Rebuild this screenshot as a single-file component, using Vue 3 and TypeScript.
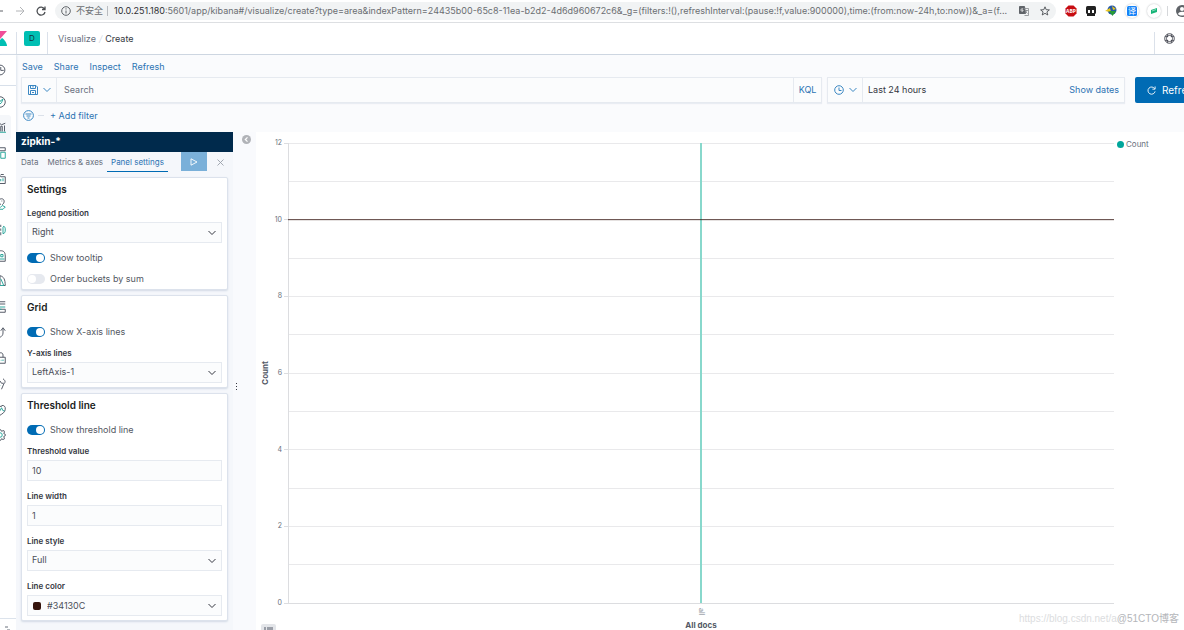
<script setup lang="ts">
import { ref } from 'vue'

interface Shape { d: string; teal?: boolean }

const menu: string[] = ['Save', 'Share', 'Inspect', 'Refresh']
const tabs: string[] = ['Data', 'Metrics & axes', 'Panel settings']
const activeTab = ref('Panel settings')

const query = ref('')
const showTooltip = ref(true)
const orderBuckets = ref(false)
const showXLines = ref(true)
const showThreshold = ref(true)
const thresholdValue = ref('10')
const lineWidth = ref('1')
const lineColor = ref('#34130C')

const yMax = 12
const yLines: number[] = Array.from({ length: 12 }, (_, i) => i + 1)
const yTicks: number[] = [0, 2, 4, 6, 8, 10, 12]
const pct = (v: number): string => `${(1 - v / yMax) * 100}%`

const nav: { name: string; shapes: Shape[] }[] = [
  { name: 'Discover', shapes: [{ d: 'M8 1a7 7 0 1 1 0 14a7 7 0 0 1 0-14z' }, { d: 'M12 4L10 9L6 12L8 7z', teal: true }] },
  { name: 'Visualize', shapes: [{ d: 'M1 4l5-2l4 3l5-2M9 14V7h2v7M14 6v8' }, { d: 'M0 15h16M3 8v5M6 9v4', teal: true }] },
  { name: 'Dashboard', shapes: [{ d: 'M1 1h14v4H1zM1 7h5v7H1z' }, { d: 'M9 7h6v8H9z', teal: true }] },
  { name: 'Canvas', shapes: [{ d: 'M1 14V2h6l2 3h6v9zM9 2h4' }, { d: 'M9 11V8M12 11V7', teal: true }] },
  { name: 'Maps', shapes: [{ d: 'M9 9C6 6 6 1 10 1s5 5 1 8M10 4h1' }, { d: 'M8 13l3-3l4 2l-3 3H3', teal: true }] },
  { name: 'Machine Learning', shapes: [{ d: 'M9 1v3M9 6v3M9 11v4' }, { d: 'M12 3c3 1 3 1 3 5s-1 4-3 5V4', teal: true }] },
  { name: 'Infrastructure', shapes: [{ d: 'M3 9C3 3 6 1 9 1s6 1 6 7v7H2' }, { d: 'M9 6h3v3H9zM7 12h7', teal: true }] },
  { name: 'Logs', shapes: [{ d: 'M1 14V4l4-3h3v13M8 1c5 1 7 5 7 13h-3' }, { d: 'M9 5l4 9H8', teal: true }] },
  { name: 'APM', shapes: [{ d: 'M1 1h14M1 4h14M8 15h7v-4H8' }, { d: 'M3 8h12M6 11h4', teal: true }] },
  { name: 'Uptime', shapes: [{ d: 'M2 12c4 4 10 1 10-4V2M9 5l3-4l3 4' }, { d: 'M2 9l4 2', teal: true }] },
  { name: 'SIEM', shapes: [{ d: 'M1 7h14v8H1zM6 7V4c0-4 6-4 6 0v3' }, { d: 'M9 11h1M12 10v2', teal: true }] },
  { name: 'Dev Tools', shapes: [{ d: 'M12 1c4 3 3 5 1 7l-3 7M8 4l2 3h3' }, { d: 'M4 14l4-4', teal: true }] },
  { name: 'Monitoring', shapes: [{ d: 'M3 5c2-5 6-3 6-1c1-4 7-2 6 3c0 4-4 6-7 8' }, { d: 'M3 9h5l2-4l2 4h2', teal: true }] },
  { name: 'Management', shapes: [{ d: 'M7 1h2l1 2l3-1l1 2l-1 2l2 1v2l-2 1l1 3l-2 1l-2-1l-1 2H7l-1-2l-3 1l-1-3l2-2l-2-2l1-3l3 1z' }, { d: 'M8 5a3 3 0 1 1 0 6a3 3 0 0 1 0-6z', teal: true }] },
]
</script>

<template>
  <div class="page">
    <header class="browser">
      <div class="nav-buttons">
        <button class="icon-btn" aria-label="Back"><svg width="12" height="12" viewBox="0 0 12 12"><path d="M1 6h10M6 1L1 6l5 5" stroke="#5f6368" /></svg></button>
        <button class="icon-btn" aria-label="Forward"><svg width="10" height="10" viewBox="0 0 10 10"><path d="M1 5h8M5 1l4 4l-4 4" stroke="#b2b4b7" /></svg></button>
        <button class="icon-btn" aria-label="Reload"><svg width="10" height="10" viewBox="0 0 10 10"><path d="M8.500 3A4 4 0 1 0 9 6M9 0.500V3.500H6" stroke="#4b4e52" stroke-width="1.300" /></svg></button>
      </div>
      <div class="omnibox">
        <svg width="10" height="10" viewBox="0 0 10 10"><circle cx="5" cy="5" r="4.300" stroke="#5f6368" /><path d="M5 4.500v3M5 2.300v1.200" stroke="#5f6368" /></svg>
        <span class="insecure">不安全</span>
        <span class="bar"></span>
        <span class="url"><b>10.0.251.180</b>:5601/app/kibana#/visualize/create?type=area&amp;indexPattern=24435b00-65c8-11ea-b2d2-4d6d960672c6&amp;_g=(filters:!(),refreshInterval:(pause:!f,value:900000),time:(from:now-24h,to:now))&amp;_a=(f...</span>
        <svg width="10" height="10" viewBox="0 0 10 10"><path d="M0.500 0.500h5l1 7h-6z" fill="#5f6368" stroke="#5f6368" /><path d="M4.500 2.500h5v7h-4M6 4.500h3M7.500 4c0 2-1 3-1.500 3.500M6.500 5.500l2 2" stroke="#85888c" stroke-width="0.800" /><path d="M4 3a1.300 1.300 0 1 0 0 2V4H3" stroke="#fff" stroke-width="0.700" /></svg>
        <svg width="10" height="10" viewBox="0 0 10 10"><path d="M5 0.800l1.200 2.900l3.200 0.200l-2.500 2l0.900 3.100L5 7.300L2.200 9l0.900-3.100l-2.500-2l3.200-0.200z" stroke="#4b4e52" stroke-width="0.900" /></svg>
      </div>
      <div class="extensions">
        <svg width="12" height="12" viewBox="0 0 12 12"><path d="M3.500 0.500h5l3 3v5l-3 3h-5l-3-3v-5z" fill="#c70d12" /><text x="6" y="8" text-anchor="middle" class="abp">ABP</text></svg>
        <svg width="12" height="12" viewBox="0 0 12 12"><rect x="1" y="1" width="10" height="8" rx="1.500" fill="#222" /><rect x="2" y="8" width="8" height="3" fill="#222" /><rect x="3" y="5" width="2" height="3" fill="#fff" /><rect x="7" y="5" width="2" height="3" fill="#fff" /></svg>
        <svg width="12" height="12" viewBox="0 0 12 12"><circle cx="7" cy="5" r="4.500" fill="#2357a8" /><path d="M0 6l5-3l1 4zM7 1l4 3l-3 1z" fill="#e9c51b" /><path d="M4 6h7l-3.500 5z" fill="#279b36" /></svg>
        <span class="round"><svg width="10" height="10" viewBox="0 0 10 10"><rect width="10" height="10" rx="1.500" fill="#1683f8" /><text x="5" y="8" text-anchor="middle" class="yi">译</text></svg></span>
        <span class="round"><svg width="8" height="8" viewBox="0 0 8 8"><path d="M1 3l6-2v4L1 7z" fill="#16b578" /><path d="M2 4l4-1.500" stroke="#fff" stroke-width="0.500" /></svg></span>
      </div>
      <span class="split"></span>
      <svg class="avatar" width="14" height="14" viewBox="0 0 14 14"><circle cx="7" cy="7" r="6" fill="#5f6368" /><circle cx="7" cy="5" r="2" fill="#fff" /><path d="M3 10c1-3 7-3 8 0c-2 2-6 2-8 0z" fill="#fff" /></svg>
    </header>

    <div class="topbar">
      <a class="logo" href="#" aria-label="Kibana"><svg width="7" height="15" viewBox="0 0 7 15"><path d="M0 0h7L0 8z" fill="#f04e98" /><path d="M0 9l2-2c2 1 5 5 5 8H0z" fill="#00bfb3" /></svg></a>
      <div class="space"><button class="space-btn">D</button></div>
      <nav class="crumbs"><a href="#">Visualize</a><i>/</i><span>Create</span></nav>
      <button class="help" aria-label="Help">
        <svg width="11" height="11" viewBox="0 0 16 16"><circle cx="8" cy="8" r="7" stroke="#343741" stroke-width="1.200" /><circle cx="8" cy="8" r="4.500" stroke="#343741" stroke-width="1.200" /><path d="M5 1.500v4M11 1.500v4M5 10.500v4M11 10.500v4M1.500 5h4M1.500 11h4M10.500 5h4M10.500 11h4" stroke="#343741" /></svg>
      </button>
    </div>

    <div class="body">
      <aside class="sidenav">
        <button class="side-item recent" aria-label="Recently viewed"><svg width="12" height="12" viewBox="0 0 16 16"><circle cx="8" cy="8" r="6.500" stroke="#535966" stroke-width="1.300" /><path d="M9 4v4.500h4" stroke="#535966" stroke-width="1.300" /></svg></button>
        <ul class="side-list">
          <li v-for="n in nav" :key="n.name" :class="{ current: n.name === 'Visualize' }">
            <a class="side-item" href="#" :aria-label="n.name">
              <svg width="12" height="12" viewBox="0 0 16 16"><path v-for="s in n.shapes" :key="s.d" :d="s.d" :stroke="s.teal ? '#2aa79b' : '#535966'" stroke-width="1.300" /></svg>
            </a>
          </li>
        </ul>
        <button class="side-item collapse" aria-label="Collapse"><svg width="10" height="8" viewBox="0 0 10 8"><path d="M5 2h3M7 5h3" stroke="#69707d" /></svg></button>
      </aside>

      <main class="main">
        <nav class="menu"><a v-for="m in menu" :key="m" href="#">{{ m }}</a></nav>

        <div class="query-row">
          <div class="box search-box">
            <button class="box-btn" aria-label="Saved queries">
              <svg width="10" height="10" viewBox="0 0 10 10"><path d="M0.500 0.500h7.500l1.500 1.500v7.500h-9zM2.500 0.500v3h5v-3M2.500 9.500v-4h5v4M5 1v1.500M4 7.500h2" stroke="#3b87c2" /></svg>
              <svg width="8" height="6" viewBox="0 0 8 6"><path d="M0.500 1L4 4.500L7.500 1" stroke="#3b87c2" /></svg>
            </button>
            <input v-model="query" class="search" type="text" placeholder="Search" aria-label="Search" />
            <button class="kql">KQL</button>
          </div>
          <div class="box date-box">
            <button class="box-btn" aria-label="Date quick select">
              <svg width="10" height="10" viewBox="0 0 10 10"><circle cx="5" cy="5" r="4.300" stroke="#3b87c2" /><path d="M5 2.500v3h2.500" stroke="#3b87c2" /></svg>
              <svg width="8" height="6" viewBox="0 0 8 6"><path d="M0.500 1L4 4.500L7.500 1" stroke="#3b87c2" /></svg>
            </button>
            <span class="range">Last 24 hours</span>
            <button class="show-dates">Show dates</button>
          </div>
          <button class="refresh">
            <svg width="9" height="9" viewBox="0 0 10 10"><path d="M8.500 3A4 4 0 1 0 9 6M9 0.500V3.500H6" stroke="#fff" /></svg>
            <span>Refresh</span>
          </button>
        </div>

        <div class="filters">
          <button class="icon-btn" aria-label="Filter options"><svg width="11" height="11" viewBox="0 0 11 11"><circle cx="5.500" cy="5.500" r="4.900" stroke="#3b87c2" /><path d="M2.500 4h6M3.500 6h4M4.500 8h2" stroke="#3b87c2" /></svg></button>
          <span class="dash"></span>
          <a href="#">+ Add filter</a>
        </div>

        <div class="workspace">
          <section class="editor">
            <h2 class="index">zipkin-*</h2>
            <div class="tabs">
              <button v-for="t in tabs" :key="t" class="tab" :class="{ active: t === activeTab }" @click="activeTab = t">{{ t }}</button>
              <button class="apply" aria-label="Apply changes"><svg width="8" height="8" viewBox="0 0 8 8"><path d="M1 0.800L7 4L1 7.200z" stroke="#fff" stroke-width="0.900" /></svg></button>
              <button class="discard" aria-label="Discard changes"><svg width="7" height="7" viewBox="0 0 7 7"><path d="M0.500 0.500l6 6M6.500 0.500l-6 6" stroke="#9a9fa9" stroke-width="0.900" /></svg></button>
            </div>

            <div class="cards">
              <section class="card">
                <h3>Settings</h3>
                <label class="lbl" for="legend">Legend position</label>
                <div class="select">
                  <select id="legend"><option>Right</option></select>
                  <svg width="8" height="6" viewBox="0 0 8 6"><path d="M0.500 1L4 4.500L7.500 1" stroke="#343741" /></svg>
                </div>
                <label class="switch"><input v-model="showTooltip" type="checkbox" /><span>Show tooltip</span></label>
                <label class="switch"><input v-model="orderBuckets" type="checkbox" /><span>Order buckets by sum</span></label>
              </section>

              <section class="card">
                <h3>Grid</h3>
                <label class="switch"><input v-model="showXLines" type="checkbox" /><span>Show X-axis lines</span></label>
                <label class="lbl" for="ylines">Y-axis lines</label>
                <div class="select">
                  <select id="ylines"><option>LeftAxis-1</option></select>
                  <svg width="8" height="6" viewBox="0 0 8 6"><path d="M0.500 1L4 4.500L7.500 1" stroke="#343741" /></svg>
                </div>
              </section>

              <section class="card">
                <h3>Threshold line</h3>
                <label class="switch"><input v-model="showThreshold" type="checkbox" /><span>Show threshold line</span></label>
                <label class="lbl" for="tvalue">Threshold value</label>
                <input id="tvalue" v-model="thresholdValue" class="field" type="text" />
                <label class="lbl" for="lwidth">Line width</label>
                <input id="lwidth" v-model="lineWidth" class="field" type="text" />
                <label class="lbl" for="lstyle">Line style</label>
                <div class="select">
                  <select id="lstyle"><option>Full</option></select>
                  <svg width="8" height="6" viewBox="0 0 8 6"><path d="M0.500 1L4 4.500L7.500 1" stroke="#343741" /></svg>
                </div>
                <label class="lbl" for="lcolor">Line color</label>
                <div class="select color">
                  <span class="swatch" :style="{ background: lineColor }"></span>
                  <input id="lcolor" v-model="lineColor" class="field" type="text" />
                  <svg width="8" height="6" viewBox="0 0 8 6"><path d="M0.500 1L4 4.500L7.500 1" stroke="#343741" /></svg>
                </div>
              </section>
            </div>
          </section>

          <div class="resizer">
            <button class="icon-btn hide" aria-label="Toggle editor"><svg width="9" height="9" viewBox="0 0 9 9"><circle cx="4.500" cy="4.500" r="4.500" fill="#b1b3b8" /><path d="M5.500 2.300L3.300 4.500l2.200 2.200" stroke="#fff" stroke-width="1.200" /></svg></button>
            <span class="grip"><i></i><i></i><i></i></span>
          </div>

          <section class="vis">
            <div class="y-title"><span>Count</span></div>
            <div class="plot">
              <svg class="chart" width="100%" height="100%">
                <g class="grid">
                  <line v-for="v in yLines" :key="v" x1="0" x2="100%" :y1="pct(v)" :y2="pct(v)" />
                </g>
                <g class="axis">
                  <line x1="0" x2="0" y1="0" y2="100%" />
                  <line x1="0" x2="100%" y1="100%" y2="100%" />
                  <line v-for="v in yTicks" :key="v" x1="-4" x2="0" :y1="pct(v)" :y2="pct(v)" />
                </g>
                <text v-for="v in yTicks" :key="v" x="-6" :y="pct(v)" dy="2" text-anchor="end" class="tick">{{ v }}</text>
                <line x1="50%" x2="50%" y1="0" y2="100%" class="series" />
                <line x1="0" x2="100%" :y1="pct(10)" :y2="pct(10)" class="threshold" />
              </svg>
            </div>
            <div class="legend"><i></i><span>Count</span></div>
            <div class="x-axis"><span class="x-tick">all</span><span class="x-title">All docs</span></div>
            <button class="legend-toggle" aria-label="Toggle legend"><svg width="9" height="6" viewBox="0 0 9 6"><path d="M0 1h2M3 1h6M0 3h2M3 3h6M0 5h2M3 5h6" stroke="#535966" /></svg></button>
          </section>
        </div>
      </main>
    </div>

    <div class="watermark"><span>https://blog.csdn.net/a</span><b>@51CTO博客</b></div>
  </div>
</template>

<style>
body { margin: 0; background: #fafbfd; }
</style>

<style scoped>
.page {
  position: relative;
  display: flex;
  flex-direction: column;
  height: 100vh;
  overflow: hidden;
  background: #fafbfd;
  color: #343741;
  font: 9px/12px Inter, "Noto Sans CJK SC", sans-serif;
}
.page *, .page *::before { box-sizing: border-box; }
svg { display: block; flex: none; fill: none; }
button { border: 0; padding: 0; background: none; color: inherit; font: inherit; cursor: pointer; }
a { color: #2c73b3; text-decoration: none; }
h2, h3, ul { margin: 0; padding: 0; list-style: none; }
input, select { font: inherit; color: inherit; margin: 0; border-radius: 0; outline: 0; }
.icon-btn { display: flex; }

.browser {
  display: flex;
  align-items: center;
  height: 23px;
  flex: none;
  background: #fff;
  border-bottom: 1px solid #dddfe2;
}
.nav-buttons { display: flex; align-items: center; width: 55px; gap: 11px; margin-left: -8px; }
.nav-buttons + .omnibox { margin-left: 8px; }
.omnibox {
  display: flex;
  align-items: center;
  flex: 1;
  min-width: 0;
  height: 18px;
  padding: 0 6px;
  border-radius: 9px;
  background: #f1f3f4;
  color: #6b6e72;
}
.insecure { flex: none; margin-left: 5px; }
.bar { width: 1px; height: 10px; margin: 0 6px 0 4px; background: #b9bcc0; }
.url { flex: 1; min-width: 0; white-space: nowrap; }
.url b { font-weight: 400; color: #303134; }
.omnibox svg:last-child { margin-left: 11px; }
.extensions { display: flex; align-items: center; gap: 8px; margin-left: 9px; }
.round { display: flex; align-items: center; justify-content: center; width: 14px; height: 14px; border-radius: 50%; background: #fff; box-shadow: 0 0 2px #b5b8bb; }
.abp { font: 700 5px "Open Sans", sans-serif; fill: #fff; }
.yi { font: 8px "Noto Sans CJK SC", sans-serif; fill: #fff; }
.split { width: 1px; height: 10px; margin: 0 7px 0 6px; background: #d5d7da; }
.avatar { margin-right: -5px; }

.topbar { display: flex; align-items: center; height: 32px; flex: none; background: #fff; border-bottom: 1px solid #cdd6e1; }
.logo { width: 16px; }
.space { display: flex; align-items: center; align-self: flex-end; width: 32px; height: 22px; padding: 0 0 10px 7px; border: solid #dbe1ea; border-width: 0 1px; }
.space-btn { width: 16px; height: 15px; border-radius: 2px; background: #00bfb3; color: #12343a; font-size: 8px; }
.crumbs { display: flex; flex: 1; gap: 3px; padding-left: 10px; }
.crumbs a { color: #69707d; }
.crumbs i { color: #d3dae6; }
.help { display: flex; align-items: center; align-self: flex-end; width: 30px; height: 22px; padding: 0 0 10px 9px; border-left: 1px solid #dbe1ea; }

.body { display: flex; flex: 1; min-height: 0; }
.sidenav { display: flex; flex-direction: column; width: 16px; flex: none; background: #fff; box-shadow: 1px 0 2px #dce3ec; overflow: hidden; }
.side-item { display: flex; align-items: center; margin-left: -6px; height: 100%; }
.recent { height: 31px; flex: none; margin: 0; border-bottom: 1px solid #d8e0ea; }
.recent svg { margin-left: -6px; }
.side-list { display: flex; flex-direction: column; height: 359px; margin-top: 3px; }
.side-list li { flex: 1; min-height: 0; }
.current { width: 11px; background: #f5f7fa; border-radius: 0 3px 3px 0; }
.collapse { height: 20px; flex: none; margin: auto 0 -8px; border-top: 1px solid #dce3ec; }

.main { display: flex; flex-direction: column; flex: 1; min-width: 0; }
.menu { display: flex; gap: 11px; padding: 6px 6px 0; }
.query-row { display: flex; margin-top: 4px; padding-left: 5px; }
.box { display: flex; height: 26px; background: #fbfcfd; border: 1px solid #e6eaf0; box-shadow: 0 1px 1px #e9edf3; }
.search-box { flex: 1; min-width: 0; margin-right: 5px; }
.box-btn { display: flex; align-items: center; gap: 5px; width: 35px; flex: none; padding-left: 6px; border-right: 1px solid #e6eaf0; }
.search { flex: 1; min-width: 0; border: 0; padding: 0 7px; background: transparent; }
.search::placeholder { color: #69707d; opacity: 1; }
.kql { width: 28px; border-left: 1px solid #e6eaf0; color: #2c73b3; }
.date-box { width: 298px; flex: none; align-items: stretch; }
.range { flex: 1; align-self: center; padding-left: 5px; }
.show-dates { padding-right: 5px; color: #2c73b3; }
.refresh { display: flex; align-items: center; gap: 6px; flex: none; width: 72px; height: 26px; margin: 0 -23px 0 10px; padding-left: 12px; border-radius: 2px; background: #006bb4; color: #fff; font-size: 10px; }
.filters { display: flex; align-items: center; height: 13px; margin-top: 6px; padding-left: 7px; }
.dash { width: 6px; height: 1px; margin: 0 6px 0 4px; background: #dbe1ea; }

.workspace { display: flex; flex: 1; min-height: 0; margin-top: 10px; }
.editor { width: 217px; flex: none; background: #f5f7fb; }
.index { height: 20px; padding-left: 5px; background: #002a4c; color: #fff; font-size: 10px; line-height: 19px; font-weight: 700; }
.tabs { display: flex; height: 20px; padding-left: 5px; font-size: 8px; color: #69707d; }
.tab { flex: none; margin-right: 9px; padding: 0; white-space: nowrap; }
.tab.active { margin: 0 auto 0 -5px; padding: 0 4px; color: #2c73b3; box-shadow: inset 0 -1px #006bb4; }
.apply { display: flex; align-items: center; justify-content: center; width: 26px; height: 19px; background: #7ab0d9; }
.discard { display: flex; align-items: center; justify-content: center; width: 26px; }
.cards { display: flex; flex-direction: column; gap: 5px; padding: 5px; }
.card { display: flex; flex-direction: column; padding: 4px 5px; background: #fff; border: 1px solid #dce2ec; border-radius: 2px; box-shadow: 0 1px 2px #d3dae6; }
h3 { margin-bottom: 12px; font-size: 10px; line-height: 14px; font-weight: 600; color: #1a1c21; }
.lbl { margin-bottom: 4px; font-size: 8px; line-height: 10px; font-weight: 600; }
.switch + .lbl, .field + .lbl, .select + .lbl { margin-top: 10px; }
.select + .switch, .switch + .switch { margin-top: 9px; }
.select { display: grid; align-items: center; }
.select > * { grid-area: 1 / 1; }
.select svg { justify-self: end; margin-right: 6px; pointer-events: none; }
select, .field { width: 100%; height: 21px; padding: 0 4px 1px; background: #fbfcfd; border: 1px solid #e6eaf0; appearance: none; color: #4b4f59; }
.color .field { padding-left: 19px; }
.swatch { width: 8px; height: 8px; margin-left: 6px; border-radius: 2px; z-index: 1; }
.switch { display: flex; align-items: center; gap: 5px; height: 12px; color: #535762; }
.switch input { display: flex; align-items: center; width: 18px; height: 10px; padding: 1px; border-radius: 5px; background: #e6e9ef; appearance: none; }
.switch input::before { content: ""; width: 8px; height: 8px; border-radius: 50%; background: #fff; }
.switch input:checked { background: #006bb4; justify-content: flex-end; }

.resizer { position: relative; width: 23px; flex: none; background: #f9fafd; }
.hide { margin: 3px 0 0 9px; }
.grip { position: absolute; left: 3px; top: calc(50% + 2px); display: grid; gap: 2px; }
.grip i { width: 1px; height: 1px; background: #343741; }

.vis { position: relative; display: grid; grid-template: 1fr 27px / 32px 1fr 70px; flex: 1; min-width: 0; padding-top: 11px; background: #fff; }
.y-title { display: flex; align-items: center; padding-left: 3px; font-size: 8px; font-weight: 700; color: #535966; }
.y-title span { writing-mode: vertical-rl; transform: rotate(180deg); }
.chart { overflow: visible; }
.grid line { stroke: #e9e9eb; }
.axis line { stroke: #dcdde0; }
.grid line, .axis line { shape-rendering: crispEdges; }
.tick { font-size: 7px; fill: #69707d; }
.threshold { stroke: #34130c; stroke-opacity: 0.8; }
.series { stroke: #88d8cc; stroke-width: 2px; }
.legend { display: flex; align-items: center; align-self: start; gap: 2px; height: 8px; margin-top: -3px; padding-left: 3px; font-size: 8px; color: #69707d; }
.legend i { width: 7px; height: 7px; border-radius: 50%; background: #00a69b; }
.x-axis { grid-area: 2 / 2; display: flex; flex-direction: column; align-items: center; padding-top: 5px; }
.x-tick { height: 11px; font-size: 7px; line-height: 8px; color: #8d929c; writing-mode: vertical-rl; }
.x-title { margin-top: 3px; font-size: 8px; line-height: 10px; font-weight: 700; color: #535966; }
.legend-toggle { position: absolute; left: 5px; bottom: -4px; display: flex; justify-content: center; width: 15px; height: 10px; padding-top: 3px; border-radius: 2px; background: #e3e5e9; }

.watermark { position: absolute; right: 5px; bottom: 3px; display: flex; line-height: 16px; font-size: 10px; font-family: "Liberation Sans", "Noto Sans CJK SC", sans-serif; color: #dcdde0; pointer-events: none; }
.watermark b { font-weight: 400; color: #b4b6ba; }
</style>
